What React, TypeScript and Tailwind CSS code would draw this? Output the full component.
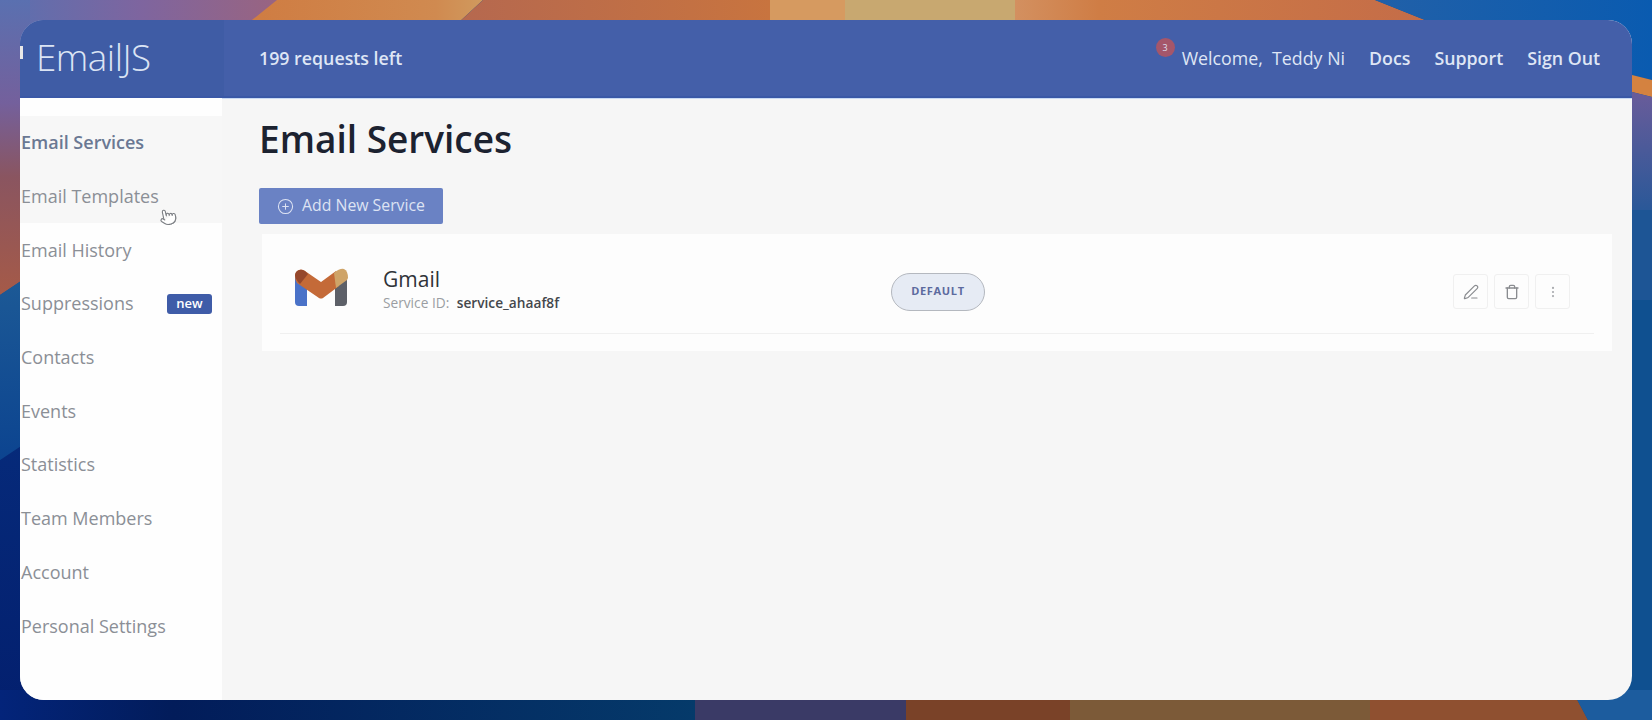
import { CirclePlus, PenLine, Trash, EllipsisVertical, Pointer } from 'lucide-react';

const navItems = [
  { name: 'Email Services', active: true, shaded: true },
  { name: 'Email Templates', shaded: true, cursor: true },
  { name: 'Email History' },
  { name: 'Suppressions', badge: 'new' },
  { name: 'Contacts' },
  { name: 'Events' },
  { name: 'Statistics' },
  { name: 'Team Members' },
  { name: 'Account' },
  { name: 'Personal Settings' },
];

function Wallpaper() {
  return (
    <svg className="absolute inset-0 w-full h-full" viewBox="0 0 1652 720" preserveAspectRatio="none">
      <defs>
        <linearGradient id="topLeft" x1="0" x2="1" y1="0" y2="0">
          <stop offset="0" stopColor="#5a70b0" />
          <stop offset="0.5" stopColor="#7e659f" />
          <stop offset="1" stopColor="#9a6480" />
        </linearGradient>
        <linearGradient id="orangeA" x1="0" x2="1" y1="0" y2="0">
          <stop offset="0" stopColor="#cf7c42" />
          <stop offset="0.8" stopColor="#d08a50" />
          <stop offset="1" stopColor="#d09a5e" />
        </linearGradient>
        <linearGradient id="orangeB" x1="0" x2="1" y1="0" y2="0">
          <stop offset="0" stopColor="#b5684f" />
          <stop offset="1" stopColor="#c8743f" />
        </linearGradient>
        <linearGradient id="orangeC" x1="0" x2="1" y1="0" y2="0">
          <stop offset="0" stopColor="#d39060" />
          <stop offset="0.2" stopColor="#cf7d45" />
          <stop offset="1" stopColor="#c46c48" />
        </linearGradient>
        <linearGradient id="blueRight" x1="0" x2="1" y1="0" y2="0">
          <stop offset="0" stopColor="#2160a8" />
          <stop offset="1" stopColor="#0a5bb0" />
        </linearGradient>
        <linearGradient id="leftTop" x1="0" x2="0" y1="0" y2="1">
          <stop offset="0" stopColor="#5a70b0" />
          <stop offset="0.35" stopColor="#74609c" />
          <stop offset="0.6" stopColor="#8a5560" />
          <stop offset="1" stopColor="#a55a48" />
        </linearGradient>
        <linearGradient id="leftMid" x1="0" x2="0" y1="0" y2="1">
          <stop offset="0" stopColor="#1d5a96" />
          <stop offset="1" stopColor="#0c4490" />
        </linearGradient>
        <linearGradient id="leftLow" x1="0" x2="0" y1="0" y2="1">
          <stop offset="0" stopColor="#062a7a" />
          <stop offset="1" stopColor="#031f6e" />
        </linearGradient>
        <linearGradient id="rightPurple" x1="0" x2="0" y1="0" y2="1">
          <stop offset="0" stopColor="#6b5c9a" />
          <stop offset="1" stopColor="#2a5898" />
        </linearGradient>
        <linearGradient id="bottomNavy" x1="0" x2="1" y1="0" y2="0">
          <stop offset="0" stopColor="#03247a" />
          <stop offset="0.25" stopColor="#021c5a" />
          <stop offset="1" stopColor="#053a6a" />
        </linearGradient>
      </defs>
      <rect width="1652" height="720" fill="#0f5090" />
      <rect width="280" height="24" fill="url(#topLeft)" />
      <polygon points="277,0 483,0 457,24 247,24" fill="url(#orangeA)" />
      <polygon points="483,0 770,0 770,24 457,24" fill="url(#orangeB)" />
      <rect x="770" width="76" height="24" fill="#d69a60" />
      <rect x="845" width="171" height="24" fill="#c8a870" />
      <polygon points="1015,0 1375,0 1435,24 1015,24" fill="url(#orangeC)" />
      <polygon points="1375,0 1652,0 1652,80 1620,73 1620,24 1435,24" fill="url(#blueRight)" />
      <polygon points="0,0 30,0 30,275 0,295" fill="url(#leftTop)" />
      <polygon points="0,295 30,275 30,440 0,460" fill="url(#leftMid)" />
      <polygon points="0,460 30,440 30,720 0,720" fill="url(#leftLow)" />
      <polygon points="1620,72 1652,80 1652,97 1620,89" fill="#d48240" />
      <polygon points="1620,89 1652,97 1652,210 1620,210" fill="url(#rightPurple)" />
      <rect x="1620" y="210" width="32" height="90" fill="#1d5595" />
      <rect y="690" width="696" height="30" fill="url(#bottomNavy)" />
      <rect x="695" y="690" width="212" height="30" fill="#3a3a66" />
      <rect x="906" y="690" width="165" height="30" fill="#7a4228" />
      <rect x="1070" y="690" width="301" height="30" fill="#7c5a38" />
      <polygon points="1370,690 1572,690 1588,720 1370,720" fill="#8f5030" />
      <polygon points="1572,690 1652,690 1652,720 1588,720" fill="#1c5c9e" />
    </svg>
  );
}

function GmailLogo() {
  return (
    <svg width="54" height="40" viewBox="0 0 54 40" className="shrink-0 -mt-[7px]">
      <path d="M1 9 a6 6 0 0 1 12 0 V38 H5 a4 4 0 0 1 -4 -4 Z" fill="#4a72c8" />
      <path d="M41 14 L53 8 V34 a4 4 0 0 1 -4 4 H41 Z" fill="#5d6068" />
      <path d="M3 3 Q7 0 11 3 L27 14 L42 3 L45 18 L29 30 Q27 31 25 30 L3 15 Q-1 8 3 3 Z" fill="#c46a38" />
      <path d="M40 5 Q46 0 50 1 Q54 3 54 10 L53 12 L42 20 Z" fill="#cfa468" />
      <path d="M2 4 Q6 0 11 3 L14 6 L6 16 Q-1 9 2 4 Z" fill="#96482c" />
    </svg>
  );
}

export default function App() {
  return (
    <div className="relative w-full h-[720px] overflow-hidden p-5 font-['Open_Sans',sans-serif]">
      <Wallpaper />
      <div className="relative h-full flex flex-col rounded-[24px] overflow-hidden bg-[#f6f6f6]">
        <span className="absolute left-0 top-[26px] w-[3px] h-[13px] bg-[#e8e8e8]" />
        <header className="h-[78px] shrink-0 flex items-center bg-[#445fa9] border-b-2 border-[#3a58a6] text-[#dfe6f5]">
          <div className="w-[204px] h-full flex items-center pl-4 bg-[#3f5ca5]">
            <span className="text-[36.8px] font-light text-[#dbe4f4] tracking-[-0.5px]">EmailJS</span>
          </div>
          <div className="flex-1 flex items-center justify-between pl-[35px] pr-[32px] text-[17.8px] font-semibold">
            <span>199 requests left</span>
            <div className="flex items-center gap-[24px]">
              <div className="relative font-normal">
                <span className="absolute -left-[26px] -top-[7px] w-[19px] h-[19px] rounded-full bg-[#a5566a] text-[9px] font-normal text-center leading-[19px] text-[#dcdfee]">
                  3
                </span>
                Welcome,&nbsp; Teddy Ni
              </div>
              <span>Docs</span>
              <span>Support</span>
              <span>Sign Out</span>
            </div>
          </div>
        </header>

        <div className="flex-1 flex min-h-0">
          <aside className="w-[202px] shrink-0 bg-[#fefefe] pt-[18px] text-[18px] text-[#8b8f96]">
            {navItems.map((item) => (
              <div
                key={item.name}
                className={`relative h-[53.7px] flex items-center justify-between pl-px pr-[10px] ${item.shaded ? 'bg-[#f7f7f7]' : ''}`}
              >
                <span className={item.active ? 'font-semibold text-[#6a7893]' : ''}>{item.name}</span>
                {item.badge && (
                  <span className="w-[45px] h-[20px] rounded-[3px] bg-[#3f5ca8] text-white text-[13px] font-semibold leading-[19px] text-center">
                    {item.badge}
                  </span>
                )}
                {item.cursor && (
                  <Pointer size={18} strokeWidth={1.5} className="absolute left-[139px] top-[38px] -rotate-12 text-[#7c7f84] fill-white" />
                )}
              </div>
            ))}
          </aside>

          <main className="flex-1 min-w-0 pl-[37px] pr-[20px] pt-[17px] border-t border-[#c9d9f2]">
            <h1 className="text-[37px] leading-[46px] font-semibold text-[#1c2230]">Email Services</h1>
            <button className="mt-[26px] w-[184px] h-[36px] flex items-center justify-center gap-2 rounded-[2px] bg-[#6a82c4] text-[15.8px] font-medium text-[#dde3f3]">
              <CirclePlus size={17} strokeWidth={1.5} />
              Add New Service
            </button>
            <section className="mt-[10px] ml-[3px] h-[117px] bg-[#fdfdfd] px-[18px]">
              <div className="h-[100px] pt-[16px] flex items-center border-b border-[#f0f0f0] pl-[14px] pr-[24px]">
                <GmailLogo />
                <div className="ml-[35px] w-[508px] -mt-[5px]">
                  <div className="text-[21px] leading-[28px] text-[#2f3338]">Gmail</div>
                  <div className="text-[13.7px] leading-[20px] text-[#9a9da2]">
                    Service ID: <span className="ml-1 font-semibold text-[#44474c]">service_ahaaf8f</span>
                  </div>
                </div>
                <span className="w-[94px] h-[38px] rounded-full border-[1.5px] border-[#b4b8bf] bg-[#e6ebf4] text-[11px] font-bold tracking-[0.7px] text-[#5c6a9e] flex items-center justify-center">
                  DEFAULT
                </span>
                <div className="ml-auto flex gap-[6px] text-[#8a8c90]">
                  <span className="w-[35px] h-[35px] border border-[#f0f0f0] rounded-[3px] flex items-center justify-center">
                    <PenLine size={16} strokeWidth={1.75} />
                  </span>
                  <span className="w-[35px] h-[35px] border border-[#f0f0f0] rounded-[3px] flex items-center justify-center">
                    <Trash size={16} strokeWidth={2} />
                  </span>
                  <span className="w-[35px] h-[35px] border border-[#f0f0f0] rounded-[3px] flex items-center justify-center">
                    <EllipsisVertical size={14} strokeWidth={1.75} className="text-[#a8aaae]" />
                  </span>
                </div>
              </div>
            </section>
          </main>
        </div>
      </div>
    </div>
  );
}
